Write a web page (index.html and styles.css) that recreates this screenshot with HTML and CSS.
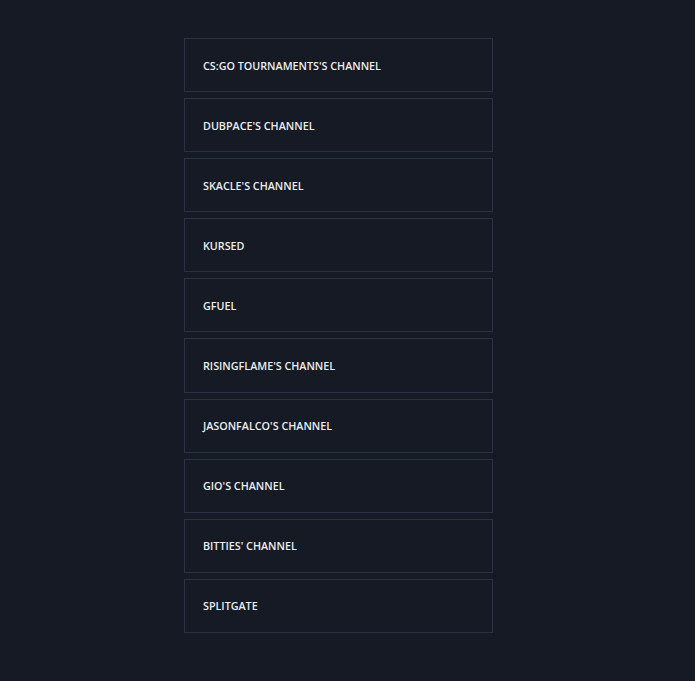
FILE: index.html
```html
<!DOCTYPE html>
<html>
<head>
<meta charset="utf-8">
<link rel="stylesheet" href="styles.css">
</head>
<body>
<ul class="list">
  <li class="item">CS:GO TOURNAMENTS'S CHANNEL</li>
  <li class="item">DUBPACE'S CHANNEL</li>
  <li class="item">SKACLE'S CHANNEL</li>
  <li class="item">KURSED</li>
  <li class="item">GFUEL</li>
  <li class="item">RISINGFLAME'S CHANNEL</li>
  <li class="item">JASONFALCO'S CHANNEL</li>
  <li class="item">GIO'S CHANNEL</li>
  <li class="item">BITTIES' CHANNEL</li>
  <li class="item">SPLITGATE</li>
</ul>
</body>
</html>
```
FILE: styles.css
```css
html, body {
  margin: 0;
  padding: 0;
  background: #161a24;
  height: 100%;
}
body {
  font-family: "Open Sans", "Liberation Sans", sans-serif;
}
.list {
  list-style: none;
  margin: 0;
  padding: 38px 0 0 184px;
  display: flex;
  flex-direction: column;
  gap: 6px;
  width: 309px;
}
.item {
  box-sizing: border-box;
  height: 54.1px;
  border: 1px solid #2c3246;
  padding: 1px 18px 0;
  display: flex;
  align-items: center;
  color: #eceef2;
  font-size: 10.75px;
  font-weight: 600;
  letter-spacing: 0;
}
```
